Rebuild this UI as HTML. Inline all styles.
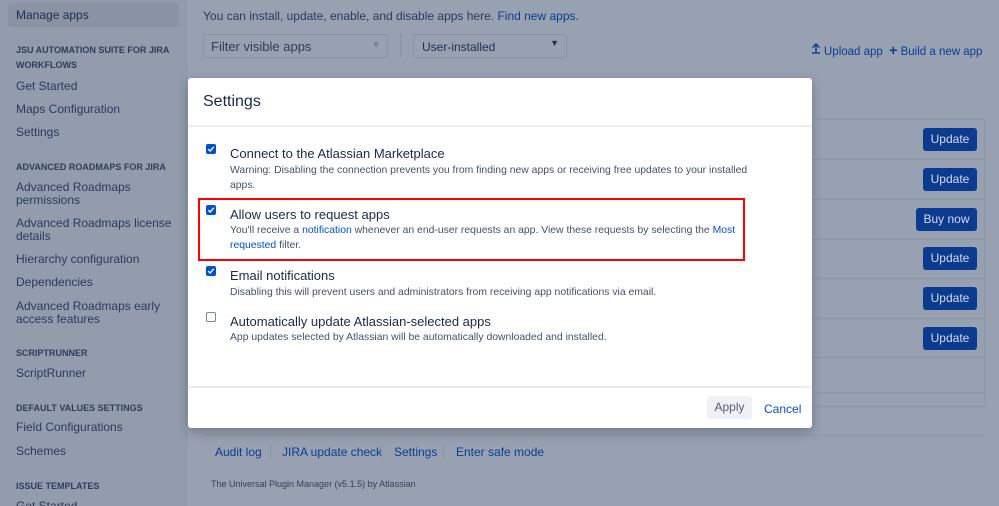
<!DOCTYPE html>
<html><head><style>
*{box-sizing:border-box;margin:0;padding:0}
html,body{width:999px;height:506px;overflow:hidden}
body{background:#98a1b2;font-family:"Liberation Sans",sans-serif;position:relative;color:#253858}
.side{position:absolute;left:0;top:0;width:187px;height:506px;background:#939cad;border-right:1px solid #8d96a6}
.side .sel{position:absolute;left:8px;top:3px;width:171px;height:24px;background:#8a93a4;border-radius:3px}
.t{position:absolute;white-space:nowrap}
.side .i{position:absolute;left:16px;font-size:12px;color:#2a3a5a;line-height:12.5px;white-space:nowrap}
.side .h{position:absolute;left:16px;font-size:9px;font-weight:bold;color:#2f3d5a;line-height:15px}
.blue{color:#0b3d91}
.btn{position:absolute;background:#0b3a8e;color:#d3dcef;font-size:12px;text-align:center;line-height:23px;border-radius:3px;height:23px}
.modal{position:absolute;left:188px;top:78px;width:624px;height:350px;background:#fff;border-radius:3px;box-shadow:0 4px 12px rgba(0,0,0,.25)}
.cb{position:absolute;left:18px;width:10px;height:10px;border-radius:2px;background:#0052cc}
.cb svg{position:absolute;left:1px;top:1px}
.cbu{background:#fff;border:1px solid #7a869a}
.lt{position:absolute;left:42px;font-size:13px;color:#172b4d;white-space:nowrap}
.ds{position:absolute;left:42px;font-size:10.4px;color:#42526e;line-height:14.5px;white-space:nowrap}
a{color:#0052cc;text-decoration:none}
</style></head><body>
<div class="side">
<div class="sel"></div>
<div class="i" style="top:9px;color:#1f2f4f">Manage apps</div>
<div class="h" style="top:43px">JSU AUTOMATION SUITE FOR JIRA<br>WORKFLOWS</div>
<div class="i" style="top:80px">Get Started</div>
<div class="i" style="top:103px">Maps Configuration</div>
<div class="i" style="top:126px">Settings</div>
<div class="h" style="top:160px">ADVANCED ROADMAPS FOR JIRA</div>
<div class="i" style="top:181px">Advanced Roadmaps<br>permissions</div>
<div class="i" style="top:217px">Advanced Roadmaps license<br>details</div>
<div class="i" style="top:253px">Hierarchy configuration</div>
<div class="i" style="top:276px">Dependencies</div>
<div class="i" style="top:300px">Advanced Roadmaps early<br>access features</div>
<div class="h" style="top:346px">SCRIPTRUNNER</div>
<div class="i" style="top:367px">ScriptRunner</div>
<div class="h" style="top:401px">DEFAULT VALUES SETTINGS</div>
<div class="i" style="top:421px">Field Configurations</div>
<div class="i" style="top:445px">Schemes</div>
<div class="h" style="top:479px">ISSUE TEMPLATES</div>
<div class="i" style="top:500px">Get Started</div>
</div>
<div class="t" style="left:203px;top:9px;font-size:12px;color:#2a3a5a">You can install, update, enable, and disable apps here. <span class="blue">Find new apps.</span></div>
<div style="position:absolute;left:203px;top:34px;width:185px;height:24px;border:1px solid #8a93a4;border-radius:3px;font-size:13px;color:#2f3d57;padding:4px 7px">Filter visible apps<span style="position:absolute;right:6px;top:5px;color:#7a8395;font-size:10px">▼</span></div>
<div style="position:absolute;left:400px;top:34px;width:1px;height:24px;background:#8a93a4"></div>
<div style="position:absolute;left:413px;top:34px;width:154px;height:24px;border:1px solid #8a93a4;border-radius:3px;font-size:12px;color:#1f2f4f;padding:5px 8px">User-installed<span style="position:absolute;right:7px;top:3px;font-size:9px">▼</span></div>
<svg style="position:absolute;left:811px;top:42px" width="10" height="12" viewBox="0 0 10 12"><path d="M5 10V2M1.5 5.5L5 2L8.5 5.5M1 11H9" stroke="#0b3d91" stroke-width="1.5" fill="none"/></svg>
<div class="t blue" style="left:824px;top:42px;font-size:11.5px">Upload app&nbsp;&nbsp;<b style="font-size:14px">+</b> Build a new app</div>
<div style="position:absolute;left:810px;top:119px;width:175px;height:288px;border:1px solid #8d96a6;border-radius:3px"></div>
<div style="position:absolute;left:810px;top:159px;width:175px;border-top:1px solid #8d96a6"></div>
<div style="position:absolute;left:810px;top:199px;width:175px;border-top:1px solid #8d96a6"></div>
<div style="position:absolute;left:810px;top:239px;width:175px;border-top:1px solid #8d96a6"></div>
<div style="position:absolute;left:810px;top:278px;width:175px;border-top:1px solid #8d96a6"></div>
<div style="position:absolute;left:810px;top:318px;width:175px;border-top:1px solid #8d96a6"></div>
<div style="position:absolute;left:810px;top:357px;width:175px;border-top:1px solid #8d96a6"></div>
<div style="position:absolute;left:810px;top:392px;width:175px;border-top:1px solid #8d96a6"></div>
<div class="btn" style="left:923px;top:128px;width:54px">Update</div>
<div class="btn" style="left:923px;top:168px;width:54px">Update</div>
<div class="btn" style="left:916px;top:208px;width:61px">Buy now</div>
<div class="btn" style="left:923px;top:247px;width:54px">Update</div>
<div class="btn" style="left:923px;top:287px;width:54px">Update</div>
<div class="btn" style="left:923px;top:327px;width:54px">Update</div>
<div style="position:absolute;left:203px;top:435px;width:781px;border-top:1px solid #8d96a6"></div>
<div class="t blue" style="left:215px;top:445px;font-size:12px">Audit log</div>
<div style="position:absolute;left:270px;top:444px;width:1px;height:16px;background:#8a93a4"></div>
<div class="t blue" style="left:282px;top:445px;font-size:12px">JIRA update check</div>
<div style="position:absolute;left:381px;top:444px;width:1px;height:16px;background:#8a93a4"></div>
<div class="t blue" style="left:394px;top:445px;font-size:12px">Settings</div>
<div style="position:absolute;left:443px;top:444px;width:1px;height:16px;background:#8a93a4"></div>
<div class="t blue" style="left:456px;top:445px;font-size:12px">Enter safe mode</div>
<div class="t" style="left:211px;top:479px;font-size:9px;color:#34415a">The Universal Plugin Manager (v5.1.5) by Atlassian</div>

<div class="modal">
<div class="t" style="left:15px;top:15px;font-size:16px;color:#172b4d">Settings</div>
<div style="position:absolute;left:0;top:47px;width:624px;border-top:2px solid #ebecf0"></div>
<div class="cb" style="top:66px"><svg width="8" height="8" viewBox="0 0 8 8"><path d="M1.2 4.2L3.2 6L6.8 1.8" stroke="#fff" stroke-width="1.4" fill="none"/></svg></div>
<div class="lt" style="top:68px">Connect to the Atlassian Marketplace</div>
<div class="ds" style="top:86px">Warning: Disabling the connection prevents you from finding new apps or receiving free updates to your installed<br>apps.</div>
<div style="position:absolute;left:10px;top:120px;width:547px;height:63px;border:2px solid #f00"></div>
<div class="cb" style="top:127px"><svg width="8" height="8" viewBox="0 0 8 8"><path d="M1.2 4.2L3.2 6L6.8 1.8" stroke="#fff" stroke-width="1.4" fill="none"/></svg></div>
<div class="lt" style="top:129px">Allow users to request apps</div>
<div class="ds" style="top:146px">You'll receive a <a>notification</a> whenever an end-user requests an app. View these requests by selecting the <a>Most</a><br><a>requested</a> filter.</div>
<div class="cb" style="top:188px"><svg width="8" height="8" viewBox="0 0 8 8"><path d="M1.2 4.2L3.2 6L6.8 1.8" stroke="#fff" stroke-width="1.4" fill="none"/></svg></div>
<div class="lt" style="top:190px">Email notifications</div>
<div class="ds" style="top:208px">Disabling this will prevent users and administrators from receiving app notifications via email.</div>
<div class="cb cbu" style="top:234px"></div>
<div class="lt" style="top:236px">Automatically update Atlassian-selected apps</div>
<div class="ds" style="top:253px">App updates selected by Atlassian will be automatically downloaded and installed.</div>
<div style="position:absolute;left:0;top:308px;width:624px;border-top:2px solid #ebecf0"></div>
<div style="position:absolute;left:519px;top:318px;width:45px;height:23px;background:#f0f1f4;border-radius:3px;font-size:12px;color:#505f79;text-align:center;line-height:23px">Apply</div>
<div class="t" style="left:576px;top:324px;font-size:12px;color:#0052cc">Cancel</div>
</div>
</body></html>
